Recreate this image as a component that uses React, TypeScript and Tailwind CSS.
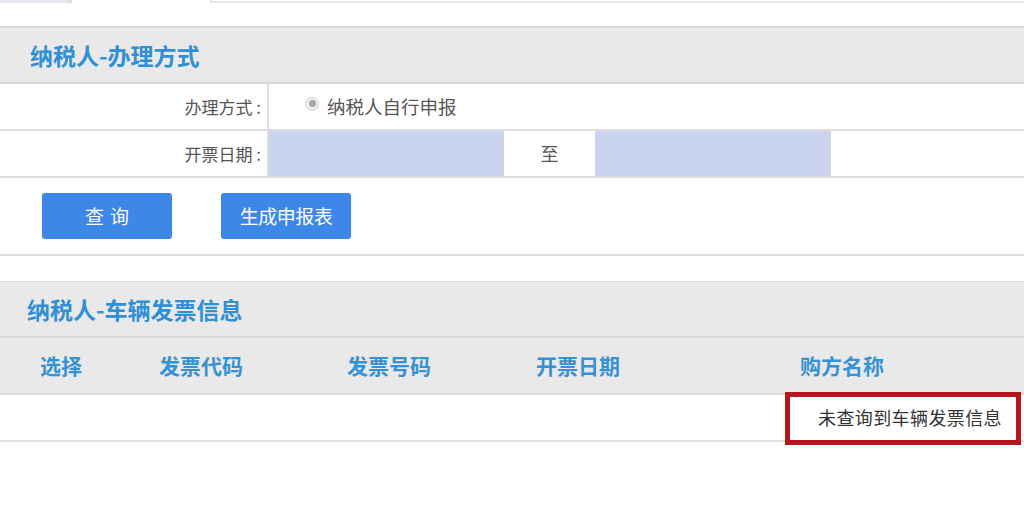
import React from 'react';

const font = { fontFamily: '"Noto Sans CJK SC", "Noto Sans", sans-serif' };

const SectionTitle: React.FC<{ title: string; pl: string }> = ({ title, pl }) => (
    <div className={`h-[54px] bg-[#e9e9e9] flex items-center ${pl}`}>
        <span className="text-[23px] font-bold text-[#2f8fd7] tracking-[0px]">{title}</span>
    </div>
);

const App: React.FC = () => {
    const columns = [
        { name: '选择', w: 'w-[159px] pl-[40px]' },
        { name: '发票代码', w: 'w-[188px]' },
        { name: '发票号码', w: 'w-[189px]' },
        { name: '开票日期', w: 'w-[264px]' },
        { name: '购方名称', w: 'flex-1' },
    ];

    return (
        <div className="w-[1024px] h-[512px] bg-white overflow-hidden" style={font}>
            {/* tab strip */}
            <div className="h-[26px] flex items-start">
                <div className="w-[66px] h-[3px] bg-[#e6eaf2]" />
                <div className="w-[6px] h-[3px] bg-[#dde0e5]" />
                <div className="w-[138px] h-[3px] bg-white" />
                <div className="w-[2px] h-[3px] bg-[#e4e4e4]" />
                <div className="flex-1 h-[3px] border-b-2 border-[#e6e6e6]" />
            </div>

            {/* section 1 */}
            <div className="border-t-2 border-b-2 border-[#d6d6d6]">
                <SectionTitle title="纳税人-办理方式" pl="pl-[30px]" />
            </div>

            <div className="flex h-[47px] border-b-2 border-[#dedede]">
                <div className="w-[269px] border-r-2 border-[#dedede] flex items-center justify-end pr-[6px] text-[17px] text-[#555]">
                    办理方式 :
                </div>
                <div className="flex items-center pl-[36px] text-[18.5px] text-[#555]">
                    <span className="w-[14px] h-[14px] rounded-full border border-[#d2d2d2] bg-[#f0f0f0] flex items-center justify-center mr-[8px] -mt-[6px]">
                        <span className="w-[7px] h-[7px] rounded-full bg-[#a6a6a6]" />
                    </span>
                    纳税人自行申报
                </div>
            </div>

            <div className="flex h-[47px] border-b-2 border-[#dedede]">
                <div className="w-[269px] border-r-2 border-[#dedede] flex items-center justify-end pr-[6px] text-[17px] text-[#555]">
                    开票日期 :
                </div>
                <div className="w-[235px] bg-[#cbd4ee]" />
                <div className="w-[91px] flex items-center justify-center text-[18px] text-[#555]">至</div>
                <div className="w-[236px] bg-[#cbd4ee] border-r border-[#d4d4d4]" />
                <div className="flex-1" />
            </div>

            {/* buttons */}
            <div className="h-[78px] flex items-center gap-[49px] pl-[42px] border-b-2 border-[#dcdcdc]">
                <button className="w-[130px] h-[46px] rounded-[3px] bg-[#3e86e8] text-white text-[19px] tracking-[6px] pl-[6px]">
                    查询
                </button>
                <button className="w-[130px] h-[46px] rounded-[3px] bg-[#3e86e8] text-white text-[19px] tracking-[-0.5px]">
                    生成申报表
                </button>
            </div>

            <div className="h-[25px]" />

            {/* section 2 */}
            <div className="border-t border-b-2 border-[#dadada]">
                <SectionTitle title="纳税人-车辆发票信息" pl="pl-[27px]" />
            </div>

            <div className="flex h-[57px] bg-[#e9e9e9] items-center border-b-2 border-[#dadada]">
                {columns.map(c => (
                    <div key={c.name} className={`${c.w} text-[21px] font-bold text-[#3592d6]`}>
                        {c.name}
                    </div>
                ))}
            </div>

            <div className="relative h-[47px] border-b-2 border-[#e0e0e0] flex items-center justify-end pr-[22px]">
                <span className="text-[18px] text-[#333] tracking-[0.4px]">未查询到车辆发票信息</span>
                <div className="absolute right-[3px] top-[-3px] w-[236px] h-[53px] border-[5px] border-[#b5141c]" />
            </div>
        </div>
    );
};

export default App;
